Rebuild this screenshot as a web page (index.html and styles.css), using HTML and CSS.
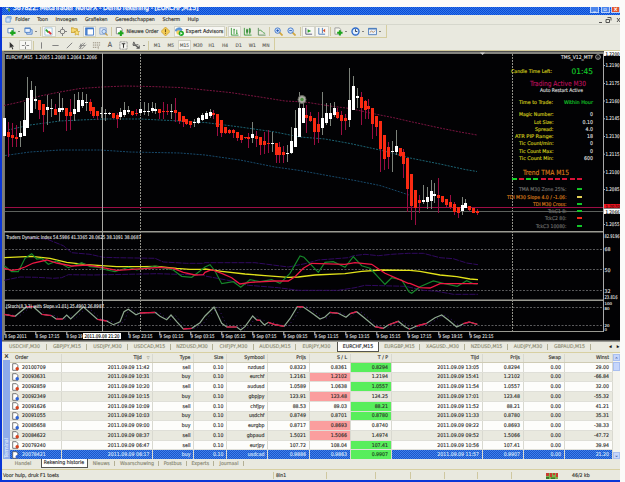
FILE: index.html
```html
<!DOCTYPE html>
<html lang="nl">
<head>
<meta charset="utf-8">
<title>MetaTrader</title>
<link rel="stylesheet" href="styles.css">
</head>
<body>
<div class="window">
  <header class="titlebar">
    <svg class="app-icon" viewBox="0 0 8 8"><path d="M1 1h3v2H1z" fill="#fff"/><path d="M3 2h3v4H4z" fill="#4b9b3c"/></svg>
    <span class="title">367822: MetaTrader NordFX - Demo rekening - [EURCHF,M15]</span>
    <span class="winbtn">_</span><span class="winbtn">▫</span><span class="winbtn close">×</span>
  </header>
  <nav class="menubar">
    <svg class="menu-icon" viewBox="0 0 8 8"><path d="M1 2h5v5H1z" fill="#cfe2fa" stroke="#6da0dd"/><path d="M2 .8h5v3" fill="none" stroke="#5b93d8"/></svg>
    <span>Folder</span><span>Toon</span><span>Invoegen</span><span>Grafieken</span><span>Gereedschappen</span><span>Scherm</span><span>Hulp</span>
    <svg class="mdi" viewBox="0 0 22 8"><path d="M1 6.5h3M9.5 1.5h3.5v3M8 3.5h3.5v3H8zM19 2l3 4M22 2l-3 4" fill="none" stroke="#444" stroke-width=".9"/></svg>
  </nav>
  <div class="toolbar" id="tb1"></div>
  <div class="toolbar second" id="tb2"></div>
  <svg class="chart" id="chart" viewBox="2 50 618 291"></svg>
  <div class="chart-tabs" id="ctabs"></div>
  <section class="terminal">
    <aside class="grip"><b>×</b><span>Terminal</span></aside>
    <div class="history" id="history"></div>
    <div class="scroll"><i class="sb">⌃</i><i class="thumb"></i><i class="sb down">⌄</i></div>
  </section>
  <div class="term-tabs"><span>Handel</span><span class="on">Rekening historie</span><span>Nieuws</span><span>Waarschuwing</span><span>Postbus</span><span>Experts</span><span>Journaal</span></div>
  <footer class="status"><span>Voor hulp, druk F1 toets</span><span>8in1</span><span></span><span></span><span></span><span></span><span></span><span></span><span class="net"><svg viewBox="0 0 12 6"><path d="M0 0h12v6H0z" fill="#7fae4d"/><path d="M0 0h3v3H0zM4 0h2v4H4zM7 0h2v2H7zM10 0h2v4h-2z" fill="#c93a30"/><path d="M0 4h3v2H0zM5 4.5h4V6H5z" fill="#39792a"/></svg></span><span>46/2 kb</span></footer>
</div>
<script src="app.js"></script>
</body>
</html>
```
FILE: styles.css
```css
* { box-sizing: border-box; }
body { margin: 0; width: 625px; height: 482px; overflow: hidden; background: #fbfbf9; padding-top: 7px;
  font: 5.2px/1 "DejaVu Sans Condensed", "DejaVu Sans", sans-serif; font-stretch: condensed; color: #2a2a27; -webkit-text-stroke: .12px currentColor; }
.window { width: 620px; height: 475px; background: #e9e9df; border-left: 2px solid #0a36d6; border-bottom: 2px solid #0a36d6; display: flex; flex-direction: column; white-space: nowrap; }
.window > * { flex: none; }

.titlebar { height: 8px; display: flex; align-items: flex-start; overflow: hidden; color: #fff; background: repeating-conic-gradient(#0c49d6 0 25%, #2f78ea 0 50%) 0 0 / 2px 2px; }
.app-icon { width: 7px; height: 6px; margin: 0 1px 0 3px; }
.title { flex: 1; font: 7px/7px "DejaVu Sans Condensed", sans-serif; font-stretch: condensed; margin-top: -2px; letter-spacing: -.17px; -webkit-text-stroke: .25px #fff; }
.winbtn { width: 9px; height: 6px; margin-left: 1.5px; background: #4c86ec; text-align: center; font-size: 5.5px; line-height: 5.5px; border: .5px solid #b9d0f8; border-top: 0; }
.close { background: #e2562f; font-weight: bold; }

.menubar { height: 10px; display: flex; align-items: center; padding-left: 3px; border-bottom: 1px solid #d6d7cd; gap: 7.7px; font-size: 5.2px; }
.menu-icon { width: 7px; height: 7px; margin-right: -4.5px; }
.mdi { width: 22px; height: 8px; margin-left: auto; }

.toolbar { height: 13px; display: flex; align-items: center; padding: 1px 0 0 3px; width: 385px; border: 0 solid #d5cd9f; border-width: 0 1px 1px 0; }
.toolbar.second { width: 273px; height: 12px; padding-top: 2px; border-bottom: 0; }
.tool { width: 13.6px; height: 11px; display: flex; align-items: center; justify-content: center; flex: none; }
.second .tool { height: 10px; }
.tool svg { width: 9px; height: 9px; flex: none; }
.tool.drop { width: 17px; }
.tool.drop::after { content: ""; border: 1.4px solid transparent; border-top: 1.8px solid #222; border-bottom: 0; margin-left: 2px; }
.tool.on { background: #f7f7f3; border: 1px solid #d3d3c8; }
.tool.wide { width: 46px; gap: 2px; }
.tool.order { padding-left: 2px; }
.tool.ea { width: 51px; margin-left: 1px; font-size: 5.35px; }
.tool.tf { color: #5b5b55; font-size: 4.9px; }
.tool.letter { font-size: 7px; color: #555; }
.sep { width: 3px; height: 9px; border-left: 1px solid #d0c9a0; margin-left: 1px; flex: none; margin-right: -1px; }

.chart { display: block; width: 618px; height: 291px; }
.chart text { font-family: "DejaVu Sans Condensed", sans-serif; font-stretch: condensed; dominant-baseline: central; -webkit-text-stroke: 0; }

.chart-tabs { height: 12px; display: grid; grid-template-columns: 45px 40px 41px 43px 42px 41px 42px 41px 42px 41px 45px 43px 40px 43px 1fr; border-bottom: 1px solid #d8d0a2; border-top: 1px solid #9a9a94; color: #8a8970; font-size: 5.2px; }
.chart-tabs span { display: flex; align-items: center; justify-content: center; height: 9px; position: relative; }
.chart-tabs span:not(.on, .pre, .nav)::after { content: ""; width: 1px; height: 6px; background: #b3b095; position: absolute; right: 0; top: 1.5px; }
.chart-tabs .on { background: #fff; color: #222; border: 1px solid #55554f; border-top: 0; height: 10px; }
.chart-tabs .nav { justify-content: flex-end; gap: 5px; color: #111; padding-right: 1px; }

.terminal { display: flex; height: 106px; }
.grip { width: 7px; margin-left: 1px; display: flex; flex-direction: column; align-items: center; background: linear-gradient(#e9e9df 7px, #8eabea 7px); }
.grip b { height: 7px; line-height: 6px; font-size: 6.5px; }
.grip span { writing-mode: vertical-rl; transform: rotate(180deg); margin-top: auto; color: #dce7fd; margin-bottom: 1px; }
.history { width: 603px; overflow: hidden; }
.row { display: grid; grid-template-columns: 52px 91px 41px 33px 41px 41.5px 41px 41px 91px 41px 41px 48.5px; height: 9.72px; background: #fdfdfb; border-bottom: .5px solid #dfdfd8; }
.row:nth-child(odd) { background: #e9e9df; }
.row span { display: flex; align-items: center; justify-content: flex-end; padding-right: 2.5px; border-right: 1px solid #d9d9d0; }
.row span:first-child { justify-content: flex-start; padding-left: 1.5px; gap: 3.5px; }
.row svg { width: 7px; height: 8px; }
.row span:last-child { padding-right: 3px; }
.row.head { height: 10px; background: #e9e9df; border-bottom: 1px solid #cfcbb4; padding-top: 1px; }
.row.head span:first-child { padding-left: 5px; }
.row.head em { font-style: normal; color: #a5a596; font-size: 4px; margin-left: 5px; }
.row .sl { background: #fb9e9e; }
.row .tp { background: #58ee5c; }
.row.sel { color: #d9e6fc; background: repeating-conic-gradient(#1c57c8 0 25%, #3f80ee 0 50%) 0 0 / 2px 2px; }
.row.sel .tp { color: #173a17; }
.scroll { width: 7px; display: flex; flex-direction: column; background: #f4f4ee; }
.scroll i { background: #c6d6fb; border: .5px solid #a9bff0; font-style: normal; color: #35599d; text-align: center; }
.sb { height: 7px; margin-top: 1px; line-height: 8px; font-weight: bold; }
.thumb { height: 9px; margin-top: 1px; }
.sb.down { margin-top: auto; line-height: 4px; }

.term-tabs { height: 11px; padding-left: 6px; display: flex; border-bottom: 1px solid #d8d0a2; color: #85846e; font-size: 5.2px; }
.term-tabs span { height: 9px; display: flex; align-items: center; justify-content: center; position: relative; width: 27.5px; }
.term-tabs span:first-child { width: 30px; }
.term-tabs span:nth-child(n+3)::after { content: ""; width: 1px; height: 5px; background: #b3b095; position: absolute; right: 0; top: 2px; }
.term-tabs .on { width: 47px; margin-left: 2.5px; background: #fff; color: #222; border: 1px solid #55554f; border-top: 0; }
.term-tabs span:nth-child(4) { width: 44px; }
.term-tabs span:nth-child(7) { width: 30px; }

.status { height: 10px; display: grid; grid-template-columns: 271px 53px 49px 35px 34px 33px 34px 34px 26px 1fr; align-items: center; padding-top: 1px; }
.status span { height: 7px; display: flex; align-items: center; padding-left: 2px; border-left: 1px solid #cfc8a0; }
.status span:first-child, .status .net, .status .net + span { border-left: 0; padding-left: 1px; }
.status .net svg { width: 12px; height: 6px; }
```
FILE: app.js
```js
const el = id => document.getElementById(id);
const svg = body => `<svg viewBox="0 0 10 10" fill="none" stroke-width="1">${body}</svg>`;
const I = {
  newchart: '<path d="M1 1.5h6v5H1z" fill="#fff" stroke="#5d86b8"/><path d="M6 3.5v6M3.500 6.500h6" stroke="#1ca51c" stroke-width="2.400"/>',
  profiles: '<path d="M3 3h6v5H3z" fill="#cfe0f8" stroke="#4f82c8"/><path d="M1 1h6v5H1z" fill="#e9f2fd" stroke="#4f82c8"/><path d="M1 1.700h6" stroke="#4f82c8"/>',
  market: '<path d="M1 1h8v8H1z" fill="#fff" stroke="#9fc3dd"/><path d="M2 3l3 3" stroke="#2aa02a" stroke-width="2"/><path d="M5 5l3 3" stroke="#d33" stroke-width="2"/>',
  target: '<circle cx="5" cy="5" r="2.600" stroke="#777"/><path d="M5 0v3M5 7v3M0 5h3M7 5h3" stroke="#777"/>',
  nav: '<path d="M0 1h3l1 1h3v4H0z" fill="#f4d874" stroke="#c89d2c"/><path d="M6.500 3l1 2h2l-1.500 1.500.5 2.500-2-1-2 1 .5-2.500L3.500 5h2z" fill="#fbe27a" stroke="#c89d2c" stroke-width=".7"/>',
  term: '<path d="M.5 1h9v8h-9z" fill="#fff" stroke="#3f78c9"/><path d="M1 1.800h8M2 2v7" stroke="#3f78c9" stroke-width="1.600"/>',
  tester: '<path d="M1 1h7v7H1z" fill="#e5eefa" stroke="#87a4cf"/><circle cx="5.500" cy="5" r="2.300" fill="#cfe4fb" stroke="#6a8fc4"/><path d="M7 7l2.500 2.500" stroke="#c7a04a" stroke-width="1.400"/>',
  order: '<path d="M1.500.5h5l1.500 2v5h-6.500z" fill="#fff" stroke="#888"/><path d="M6.500 4v6M3.500 7h6" stroke="#1ca51c" stroke-width="2.300"/>',
  diamond: '<path d="M5 0l5 5-5 5-5-5z" fill="#f3cc55" stroke="#c99a2c" stroke-width=".8"/><path d="M5 2.500v3M5 6.500v1" stroke="#76561a" stroke-width="1.200"/>',
  ea: '<path d="M0 4c2-4 7-4 8-1L5 6z" fill="#5f9bdd" stroke="#3b76bb" stroke-width=".6"/><circle cx="4" cy="6" r="2.500" fill="#f3cf60"/><circle cx="7" cy="7" r="2.900" fill="#1faa27"/><path d="M6 5.500l2.500 1.500L6 8.500z" fill="#fff"/>',
  bars: '<path d="M1.500 1v8h8M4.500 2v6M4 3h1.500M7.500 3v5M7 7h1.500" stroke="#3a9a3a"/>',
  candles: '<path d="M1.500 1v8h8M4.500 2v6M7.500 1v7" stroke="#3a9a3a"/><path d="M4 3h1v3h-1zM7 2h1v4h-1z" fill="#fff" stroke="#2a842a"/>',
  line: '<path d="M1.500 1v8h8" stroke="#5c8a5c"/><path d="M2 4c3-2 4 3 7 3" stroke="#3a9a3a"/>',
  zin: '<path d="M6 6l3.500 3.500" stroke="#d2a73d" stroke-width="1.800"/><circle cx="4" cy="4" r="3" fill="#cfe3fb" stroke="#3e74c8"/><path d="M2.500 4h3M4 2.500v3" stroke="#2056b8"/>',
  zout: '<path d="M6 6l3.500 3.500" stroke="#d2a73d" stroke-width="1.800"/><circle cx="4" cy="4" r="3" fill="#cfe3fb" stroke="#3e74c8"/><path d="M2.500 4h3" stroke="#2056b8"/>',
  scroll: '<path d="M2 1v7h7" stroke="#557"/><path d="M4 2.500l4 2-4 2z" fill="#2aa02a"/>',
  shift: '<path d="M2 1v7h7M6 1v6" stroke="#4474b8"/><path d="M9 2L6.500 4 9 6z" fill="#d5502d"/>',
  ind: '<path d="M1 1h5l1.500 2v5H1z" fill="#f6f6ee" stroke="#999"/><path d="M6.500 3.500v6M3.500 6.500h6" stroke="#1ca51c" stroke-width="2.200"/>',
  clock: '<circle cx="5" cy="5" r="3.900" fill="#e4effc" stroke="#2e6bcb" stroke-width="1.500"/><path d="M5 2.500V5h2" stroke="#234"/>',
  tmpl: '<path d="M.5 1.500h9v7h-9z" fill="#e7f0fb" stroke="#4c7cbb"/><path d="M.5 2h9" stroke="#4c7cbb" stroke-width="1.500"/><path d="M2 6l2-1.500 2 1.500 2-2" stroke="#b85"/>',
  cursor: '<path d="M3 1v7l1.700-1.500L6 9.500l1-.5-1.200-2.800H8z" fill="#333"/>',
  cross: '<path d="M5 1v3M5 6v3M1 5h3M6 5h3" stroke="#777"/>',
  vline: '<path d="M5 1.500v7" stroke="#777"/>', hline: '<path d="M1.500 5h7" stroke="#777"/>', tline: '<path d="M2 8l6-6" stroke="#777"/>',
  channel: '<path d="M1 7l5-5M4 9l5-5M1 9l7-7M2 5h6M3 3v6" stroke="#777" stroke-width=".8"/>',
  fibo: '<path d="M1 2h8M1 4.500h8M1 7h5M7 6v3" stroke="#8f8676" stroke-dasharray="1.500 .7"/>',
  label: '<path d="M1 1h8v8H1z" fill="#f8f8f3" stroke="#777" stroke-dasharray="1 .6"/><path d="M3 3h4M5 3v4.500" stroke="#333" stroke-width="1.200"/>',
  arrows: '<path d="M2 1l2 4-3-1zM1 5l6-1" stroke="#555"/><path d="M4 5l4 3M8 5v3H5" stroke="#555" stroke-width="1.200"/>'
};
const t = (n, c = '', txt = '') => `<div class="tool ${c}">${svg(I[n])}${txt}</div>`;
const sep = '<div class="sep"></div>';
el('tb1').innerHTML = t('newchart', 'drop') + t('profiles', 'drop') + sep + t('market', 'on') + t('target') + t('nav') + t('term', 'on') + t('tester') + sep +
  t('order', 'wide order', 'Nieuwe Order') + t('diamond') + t('ea', 'wide ea on', 'Expert Advisors') + sep + t('bars', 'on') + t('candles') + t('line') + sep +
  t('zin') + t('zout') + sep + t('scroll', 'on') + t('shift', 'on') + sep + t('ind', 'drop') + t('clock', 'drop') + t('tmpl', 'drop');
el('tb2').innerHTML = t('cursor') + t('cross', 'on') + sep + ['vline', 'hline', 'tline', 'channel', 'fibo'].map(n => t(n)).join('') +
  '<div class="tool letter">A</div>' + t('label') +
  t('arrows', 'drop') + sep + ['M1', 'M5', 'M15', 'M30', 'H1', 'H4', 'D1', 'W1', 'MN'].map(x => `<div class="tool tf ${x === 'M15' ? 'on' : ''}">${x}</div>`).join('');

const tabs = ['USDCHF,M30', 'GBPJPY,M15', 'USDJPY,M30', 'USDCAD,M15', 'NZDUSD,M30', 'CHFJPY,M30', 'AUDUSD,M15', 'EURJPY,M30', 'EURCHF,M15', 'EURGBP,M15', 'XAGUSD.,M30', 'NZDUSD,M15', 'AUDJPY,M30', 'GBPAUD,M15'];
el('ctabs').innerHTML = tabs.map((x, i) => `<span class="${i === 8 ? 'on' : i === 7 ? 'pre' : ''}">${x}</span>`).join('') + '<span class="nav"><i>◂</i><i>▸</i></span>';

const rows = `20100709|2011.09.09 11:42|sell|0.10|nzdusd|0.8323|0.8361|0.8294|2011.09.09 13:05|0.8294|0.00|29.00
20093631|2011.09.09 10:31|buy|0.10|eurchf|1.2161|1.2102|1.2194|2011.09.09 15:41|1.2102|0.00|-66.84
20092859|2011.09.09 10:20|sell|0.10|audusd|1.0589|1.0638|1.0557|2011.09.09 11:54|1.0557|0.00|32.00
20092349|2011.09.09 10:15|buy|0.10|gbpjpy|123.91|123.48|124.25|2011.09.09 17:01|123.48|0.00|-55.32
20091626|2011.09.09 10:09|sell|0.10|chfjpy|88.53|89.03|88.21|2011.09.09 11:52|88.21|0.00|41.21
20091055|2011.09.09 10:03|buy|0.10|usdchf|0.8749|0.8701|0.8780|2011.09.09 11:33|0.8780|0.00|35.31
20085658|2011.09.09 09:00|buy|0.10|eurgbp|0.8717|0.8693|0.8740|2011.09.09 09:22|0.8693|0.00|-38.33
20084622|2011.09.09 08:37|sell|0.10|gbpaud|1.5021|1.5066|1.4974|2011.09.09 09:52|1.5066|0.00|-47.72
20079240|2011.09.09 06:47|sell|0.10|eurjpy|107.72|108.04|107.41|2011.09.09 10:56|107.41|0.00|39.94
20078421|2011.09.09 06:17|buy|0.10|usdcad|0.9886|0.9863|0.9907|2011.09.09 11:57|0.9907|0.00|21.20`.split('\n').map(r => r.split('|'));
el('history').innerHTML = '<div class="row head">' + ['Order', 'Tijd<em>▽</em>', 'Type', 'Size', 'Symbool', 'Prijs', 'S / L', 'T / P', 'Tijd', 'Prijs', 'Swap', 'Winst'].map(x => `<span>${x}</span>`).join('') + '</div>' +
  rows.map((r, n) => `<div class="row ${n === 9 ? 'sel' : ''}">` + r.map((v, i) => {
    const c = i === 6 && v === r[9] ? 'sl' : i === 7 && v === r[9] ? 'tp' : '';
    const icon = i ? '' : `<svg viewBox="0 0 7 8"><path d="M.7.7h3.600l1.500 1.600v5H.7z" fill="#fff" stroke="#555" stroke-width=".8"/><circle cx="5.200" cy="5.800" r="1.700" fill="${r[2] === 'buy' ? '#2b63d8' : '#d9421c'}"/></svg>`;
    return `<span class="${c}">${icon}${v}</span>`;
  }).join('') + '</div>').join('');

/* Chart: values are in thirds of a pixel, relative to each segment's origin */
const o = [];
const rect = (x, y, w, h, f) => o.push(`<rect x="${x}" y="${y}" width="${w}" height="${h}" fill="${f}"/>`);
const line = (x1, y1, x2, y2, s, d = '', w = 1) => o.push(`<path d="M${x1} ${y1}L${x2} ${y2}" stroke="${s}" stroke-width="${w}" stroke-dasharray="${d}"/>`);
const text = (x, y, s, f = '#ddd', w = 0, size = 5, anchor = 'start') =>
  o.push(`<text x="${x}" y="${y}" fill="${f}" stroke="${f}" stroke-width=".15" font-size="${size}" text-anchor="${anchor}" ${w ? `textLength="${w}" lengthAdjust="spacingAndGlyphs"` : ''}>${s}</text>`);
const poly = (pts, s, w = 1, d = '') => o.push(`<polyline points="${pts.map(p => p.join(',')).join(' ')}" fill="none" stroke="${s}" stroke-width="${w}" stroke-dasharray="${d}"/>`);
const pairs = s => s.trim().split(/\s+/).map(p => p.split(',').map(Number));
const seg = (a, b, c) => [[a, 0], [b, 205], [c, 410]].flatMap(([s, dx]) => pairs(s).map(([x, y]) => [+(x / 3 + dx).toFixed(1), +(y / 3 + 225).toFixed(1)]));

rect(2, 50, 618, 291, '#020204');
rect(2, 50, 618, 1, '#d3cc9e'); rect(2, 51, 618, 1, '#4e4e4e'); rect(4, 52, 616, 2, '#85857f');
rect(2, 51, 2, 290, '#7d7d78'); rect(4, 53, 1, 278, '#77776f');
rect(4, 231, 599, 1.500, '#9a9a92'); rect(4, 299.500, 599, 1.500, '#9a9a92'); rect(4, 331, 599, 1, '#9a9a92');
rect(603, 53, 1, 279, '#aaa'); rect(2, 340, 618, 1, '#5f5f5b');
[249.500, 269.500, 290.500, 307.500, 325.500].forEach(y => line(5, y, 603, y, '#5a5a5c', '2 1.500'));
line(140.500, 54, 140.500, 331, '#909088', '2 1'); line(512.500, 54, 512.500, 331, '#909088', '2 1');

poly(pairs('4,105.5 20,102 40,96 60,92 80,88.5 102,87 125,86 150,86.5 180,87.5 205,90 230,92.5 260,97 285,101 305,102 330,106 350,108.5 375,114 395,118 410,121.5 440,128 460,132 477,135'), '#7a1440', 1, '2 1.2');
poly(pairs('8,130 30,125 60,121 80,120 105,119 140,119 170,120.5 205,122.5 240,127 275,132 300,137 325,139 350,143.5 380,150 410,158 440,164 465,169.5 477,171.5'), '#1b6272', 1, '2 1.2');
poly(pairs('5,155.5 30,152 60,150 100,150 130,152 180,153 205,155 240,160 275,167 300,170.5 330,176 355,180.5 380,185.5 400,192 409,195'), '#17496a', 1, '2 1.2');
line(5, 207.500, 603, 207.500, '#9c0d45'); line(5, 211.500, 603, 211.500, '#5c605c');

const C = [
  [0, `13,205,258,205,258,w 25,246,262,215,320,r 37,254,264,220,292,r 49,260,268,225,290,r 60,248,262,212,290,w 72,209,257,155,257,w 83,144,234,80,234,w 95,119,190,93,190,w 107,148,154,108,178,w 118,150,180,150,206,r 130,162,195,162,245,r 142,170,180,134,224,w 154,174,177,148,200,w 165,176,195,163,195,r 177,173,185,130,213,w 188,173,180,145,186,w 200,174,198,174,244,r 211,186,197,148,240,r 223,177,191,133,212,w 235,150,185,127,185,w 246,150,168,127,175,w 258,155,160,133,182,w 270,156,182,147,193,r 281,170,198,170,204,r 293,183,198,183,210,r 305,188,192,172,205,w 316,189,192,176,213,w 328,188,191,186,194,w 340,190,204,190,206,r 351,196,207,190,234,r 362,186,202,175,210,w 374,179,195,157,200,w 386,181,187,167,193,w 398,183,194,183,197,r 409,189,193,176,197,r 421,178,190,158,194,w 433,183,185,157,194,w 444,183,186,160,198,w 456,174,184,157,190,w 467,176,182,160,192,w 479,178,190,178,208,r 490,182,186,155,207,r 502,183,186,163,195,r 514,182,186,163,207,w 526,180,190,145,216,r 537,186,214,186,222,r 549,199,216,199,231,r 560,208,222,208,225,r 572,212,225,212,234,r 583,216,219,207,230,w 595,203,219,200,221,w 607,195,211,190,214,w`],
  [205, `3,189,206,183,206,w 15,185,198,176,204,w 26,190,195,180,208,r 38,192,230,192,258,r 50,210,250,210,262,r 62,231,250,231,253,r 73,240,250,236,252,r 85,240,248,238,264,r 97,247,264,247,272,r 108,255,270,255,278,r 120,262,265,262,268,r 131,262,268,250,294,r 143,251,264,215,278,w 154,257,266,243,290,r 166,261,284,261,314,r 178,272,284,245,312,r 190,278,282,240,308,r 201,279,283,247,305,w 213,279,315,279,338,r 224,292,315,275,340,r 236,306,315,287,338,r 247,309,312,284,336,w 259,273,309,232,312,w 271,234,292,180,292,w 283,173,262,127,262,w 294,175,219,140,219,w 305,195,204,165,248,r 317,198,213,186,217,r 328,205,246,205,284,r 340,223,246,186,278,r 352,203,234,127,254,w 364,189,220,158,226,w 375,189,207,158,227,w 387,174,195,157,202,w 398,186,204,174,208,r 410,195,213,184,254,r 422,205,212,193,240,r 433,150,210,54,230,w 445,108,180,78,180,w 457,139,145,115,175,w 469,142,174,127,224,r 480,153,180,150,208,r 491,168,178,148,206,r 503,173,223,173,266,r 515,197,232,197,258,r 526,214,296,214,366,r 538,254,327,254,360,r 550,291,320,275,356,r 562,302,306,272,366,w 573,287,306,240,315,w 585,294,318,294,320,r 596,306,342,296,384,r 607,323,417,323,486,r 619,371,467,371,510,r`],
  [410, `16,420,475,420,524,r 28,450,458,435,488,r 40,450,457,406,462,w 51,442,455,410,478,w 63,423,452,390,478,w 74,433,437,400,458,w 86,435,444,384,490,r 97,437,457,437,460,r 109,447,466,447,475,r 121,457,470,435,478,r 133,463,486,455,496,r 144,472,488,472,504,r 156,466,482,440,495,w 167,460,473,448,473,w 179,467,481,467,484,r 191,473,488,473,490,r 202,482,489,476,494,r`]
];
C.forEach(([dx, list]) => list.split(' ').forEach(s => {
  const [zx, a, b, h, l, c] = s.split(',');
  const x = Math.floor(dx + zx / 3), Y = v => Math.round(50 + v / 3);
  rect(x, Y(h), 1, Math.max(1, Y(l) - Y(h)), c === 'w' ? '#7c827a' : '#9c0d42');
  rect(x - 1, Y(a), 3, Math.max(1, Y(b) - Y(a)), c === 'w' ? '#fff' : '#fa2a12');
}));
o.push('<circle cx="302" cy="99.500" r="4" fill="#aaaaa2" stroke="#66665f"/><circle cx="302" cy="99.500" r="1.700" fill="#4d9040"/>');
o.push('<path d="M480 52.500h5l-2.500 2.500z" fill="#ccc"/>');

poly(seg('13,60 80,38 140,42 190,62 215,83 270,88 310,97 350,98 465,100 490,111 560,115 610,115', '0,113 150,113 250,126 300,116 340,105 430,98 445,92 480,88 520,92 560,88 610,85', '0,85 40,85 90,98 130,101 170,114 204,119').slice(1), '#30095f', 1, '6 1');
poly(seg('13,166 60,156 110,157 160,160 185,158 205,149 280,150 470,146 610,150', '0,153 80,168 130,181 220,188 280,196 400,196 450,188 480,181 600,184', '0,187 40,196 80,199 130,208 204,208'), '#30095f', 1, '6 1');
poly(seg('13,98 95,94 150,100 200,112 260,119 350,125 430,125 470,124 530,130 570,133 610,133', '0,132 50,139 120,147 180,152 250,157 280,156 330,150 420,146 470,139 530,135 610,136', '0,136 30,139 90,150 140,155 180,162 204,164'), '#e2e21a', 1.300);
poly(seg('13,122 35,140 55,140 75,100 95,86 110,102 125,100 145,118 170,108 205,128 245,113 270,125 295,127 320,135 345,140 385,127 410,135 430,130 465,123 490,129 520,135 545,154 575,157 600,138', '0,126 15,119 30,138 50,176 85,170 107,187 135,164 165,170 200,164 225,175 255,145 285,93 297,97 340,142 360,112 385,110 420,127 445,95 470,122 495,130 540,178 560,158 590,165 612,200', '5,205 30,185 70,168 100,175 142,184 170,167 190,176 202,177'), '#16852a', 1.200);
poly(seg('13,130 35,136 55,133 75,126 100,114 140,105 170,114 215,123 260,120 305,127 350,136 430,131 480,127 520,130 550,142 585,150 610,149', '0,142 20,134 50,145 80,158 105,177 135,172 210,168 250,168 270,155 295,130 320,115 420,118 450,113 500,118 540,145 570,158 610,175', '0,175 30,188 60,189 90,176 204,176'), '#ee1744', 1.300);
const st = seg('13,268 45,274 80,245 100,245 125,268 155,272 168,282 188,282 200,270 212,282 250,245 292,283 320,288 340,299 360,290 372,260 385,253 408,269 420,264 465,262 480,274 500,284 513,270 530,290 550,312 575,310 600,293', '0,273 27,246 50,295 65,306 95,306 107,315 120,305 143,273 155,285 165,286 178,300 190,292 210,299 237,304 255,281 277,245 295,246 325,267 345,282 360,276 375,262 400,265 423,277 435,266 455,260 475,276 510,305 535,310 550,300 580,289 600,305 612,312', '0,312 20,303 50,295 75,278 95,270 115,285 140,306 160,296 178,291 202,298');
poly(st.filter(p => p[0] < 473).map(([x, y]) => [x + 4, y]), '#3a1a70', 1, '1 3');
poly(st, '#8ea890', 1.200);
st.forEach((p, i) => { const q = st[i + 1]; if (q && Math.abs((q[1] - p[1]) / (q[0] - p[0])) < .4) poly([p, q], '#e01545', 1.300); });

rect(102, 53, 1, 279, '#a8a8a2');
text(6, 57, 'EURCHF,M15&#160; 1.2065 1.2068 1.2064 1.2066', '#ddd', 91, 5);
text(6, 237, 'Traders Dynamic Index 54.5986 41.3365 28.0625 38.1091 38.0687', '#ddd', 135, 5);
text(6, 306, '[Stoch(8,3,3) with Slope v1.01] 25.4902 26.8987', '#ddd', 98, 5);
[['1.2190', 65], ['1.2175', 83], ['1.2160', 100.500], ['1.2145', 118.300], ['1.2130', 136], ['1.2115', 153.700], ['1.2100', 171.500], ['1.2085', 189], ['1.2055', 224]].forEach(([s, y]) => { rect(604, y, 1, 1, '#aaa'); text(605.500, y, s, '#ddd', 14, 5); });
rect(604, 51, 16, 5, '#fff'); text(605.500, 53.500, '1.2200', '#222', 14, 5);
rect(604, 204, 16, 4, '#ed1520'); text(605.500, 206.200, '1.2070', '#52050a', 14, 4.300);
rect(604, 208.500, 16, 5.500, '#fff'); text(605.500, 211.500, '1.2066', '#222', 14, 5);
text(604.500, 236, '82.9196', '#ddd', 15, 5); text(604.500, 249.300, '68', '#ddd', 6); text(604.500, 269.500, '50', '#ddd', 6); text(604.500, 290.500, '32', '#ddd', 6); text(604.500, 297, '23.816', '#ddd', 13, 5);
text(604.500, 303.800, '100', '#ddd', 7.500, 3.800); text(604.500, 308, '80', '#ddd', 5, 3.800); text(604.500, 325, '20', '#ddd', 5, 3.800); text(604.500, 329.200, '0', '#ddd', 2.500, 3.800);
['8 Sep 2011', '8 Sep 17:15', '8 Sep 19', '', '8 Sep 23:15', '9 Sep 01:15', '9 Sep 03:15', '9 Sep 05:15', '9 Sep 07:15', '9 Sep 09:15', '9 Sep 11:15', '9 Sep 13:15', '9 Sep 15:15', '9 Sep 17:15', '9 Sep 19:15', '9 Sep 21:15'].forEach((s, i) => {
  const x = 4.300 + 31 * i; if (!s) return; rect(x, 332, 1, 3, '#ccc'); text(x + .3, 336.300, s, '#ddd', i === 2 ? 16 : i ? 24 : 22, 5);
});
rect(83, 333, 38, 6, '#fff'); text(84.500, 336.200, '2011.09.08 21:20', '#111', 35, 5);

text(561, 57, 'TMS_V12_MTF', '#ddd', 32, 5);
o.push('<circle cx="598" cy="57" r="2.400" fill="none" stroke="#bbb" stroke-width=".8"/><path d="M596.800 57.500q1.200 1.500 2.400 0M597 56.200h.5M598.700 56.200h.5" fill="none" stroke="#bbb" stroke-width=".6"/>');
const Y = '#cfc81a', G = '#12c528';
text(511, 71, 'Candle Time Left:', Y, 41, 5.100); text(571.500, 71.500, '01:45', G, 21.500, 7.800);
text(530, 83.700, 'Trading Active M30', '#b80f58', 56, 7); text(540, 90.200, 'Auto Restart Active', '#ddd', 43, 5.100);
text(519, 102.200, 'Time to Trade:', Y, 34, 5.100); text(564, 102.200, 'Within Hour', G, 29, 5.100);
[['Magic Number:', 519, 114.300, '0'], ['Lot Size:', 534, 121.500, '0.10'], ['Spread:', 535, 129, '4.0'], ['ATR PIP Range:', 515, 136, '18'], ['Tic Count/min:', 519, 143.300, '0'], ['Tic Count Max:', 519, 150.600, '0'], ['Tic Count Min:', 519, 158, '600']].forEach(([s, x, y, v]) => { text(x, y, s, Y, 553.500 - x, 5.100); text(593, y, v, '#ddd', 0, 5.200, 'end'); });
text(523, 173.300, 'Trend TMA M15', '#d87a18', 46, 7);
'grggrrrrrr'.split('').forEach((c, i) => rect(Math.round(511.500 + 7.250 * i), 178, 5, 2, c === 'g' ? '#14d227' : '#d81238'));
[['TMA M30 Zone 25%:', 519, 189.200, '#6e6e6c', G], ['TDI M30 Slope 4.0 / -1.06:', 507, 196.500, '#d87a18', '#e3cf55'], ['TDI M30 Cross:', 533, 203.700, '#d87a18', G], ['TckC1 8:', 548, 211, '#6e6e6c', G], ['TckC2 80:', 545, 218.200, '#6e6e6c', '#f22a18'], ['TckC3 10080:', 536, 225.500, '#6e6e6c', G]].forEach(([s, x, y, f, p]) => { text(x, y, s, f, 566.500 - x, 5); rect(577, Math.round(y) - 1, 5, 2, p); });
el('chart').innerHTML = o.join('');
```
